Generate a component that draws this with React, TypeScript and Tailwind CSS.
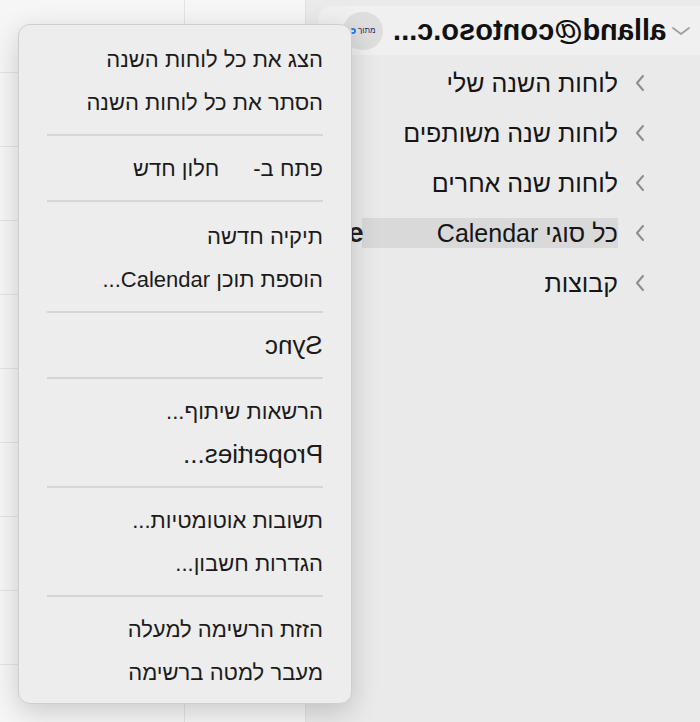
import React from "react";

const font = { fontFamily: '"Liberation Sans", Arial, "Noto Sans", sans-serif' };

function Chevron() {
  return (
    <svg width="12" height="20" viewBox="0 0 12 20" className="shrink-0">
      <path d="M9 3 L3 10 L9 17" fill="none" stroke="#8c8c8c" strokeWidth="2" strokeLinecap="round" strokeLinejoin="round" />
    </svg>
  );
}

function Sep() {
  return <div className="mr-[28px] ml-[28px] mt-[10px] mb-[11px] h-[2px] bg-[#d5d5d5]" />;
}

function Item({ children }: { children: React.ReactNode }) {
  return (
    <div className="h-[43px] flex items-center pr-[28px] text-[22px] text-[#1b1b1b] whitespace-nowrap">
      {children}
    </div>
  );
}

function Mirror({ children, className = "" }: { children: React.ReactNode; className?: string }) {
  return (
    <span dir="ltr" className={"inline-block -scale-x-100 " + className}>
      {children}
    </span>
  );
}

export default function App() {
  const rows = [73, 74, 74, 74, 74, 74, 74, 74, 74, 74];
  return (
    <div className="relative w-[700px] h-[722px] overflow-hidden flex bg-[#eaeaea]" style={font}>
      {/* calendar grid background */}
      <div className="w-[306px] h-full flex flex-col bg-[#f6f6f6] border-r border-[#e2e2e2]">
        {rows.map((h, i) => (
          <div key={i} className="flex border-b border-[#e3e3e3] shrink-0" style={{ height: h }}>
            <div className="w-[185px] border-r border-[#e3e3e3]" />
            <div className="flex-1" />
          </div>
        ))}
      </div>

      {/* right pane */}
      <div dir="rtl" className="flex-1 flex flex-col pt-[6px]">
        <div className="h-[49px] ml-[12px] rounded-l-[14px] bg-[#f0f0f0] flex items-center pr-[8px] gap-[4px]">
          <svg width="22" height="12" viewBox="0 0 22 12" className="shrink-0">
            <path d="M3 3 L11 9 L19 3" fill="none" stroke="#a0a0a0" strokeWidth="1.8" strokeLinecap="round" strokeLinejoin="round" />
          </svg>
          <span className="text-[29px] font-bold text-[#111] whitespace-nowrap leading-none">
            <Mirror>alland@contoso.c...</Mirror>
          </span>
          <div className="mr-[6px] w-[40px] h-[38px] rounded-full bg-[#dedede] flex items-center justify-center gap-[2px]">
            <span className="text-[8px] text-[#1b2a6b]">מתוך</span>
            <span className="w-[6px] h-[6px] rounded-full border-2 border-[#2f7fe0] border-l-transparent" />
          </div>
        </div>

        <div className="flex flex-col mt-[3px]">
          {["לוחות השנה שלי", "לוחות שנה משותפים", "לוחות שנה אחרים", "כל סוגי Calendar", "קבוצות"].map((t, i) => (
            <div key={i} className="h-[50px] flex items-center pr-[54px]">
              <Chevron />
              <div
                className={
                  "mr-[16px] text-[25px] text-[#151515] whitespace-nowrap leading-[30px] " +
                  (i === 3 ? "bg-[#d9d9d9] w-[256px] relative" : "")
                }
              >
                {t}
                {i === 3 && (
                  <span className="absolute left-[-14px] top-0 text-[28px] font-bold text-[#222]">e</span>
                )}
              </div>
            </div>
          ))}
        </div>
      </div>

      {/* context menu */}
      <div
        dir="rtl"
        className="absolute left-[18px] top-[24px] w-[334px] h-[680px] rounded-[12px] bg-[#ededed] border border-[#cfcfcf] shadow-[0_8px_28px_rgba(0,0,0,0.18)] flex flex-col pt-[13px]"
      >
        <Item>הצג את כל לוחות השנה</Item>
        <Item>הסתר את כל לוחות השנה</Item>
        <Sep />
        <Item>
          <span>פתח ב-</span>
          <span className="mr-[34px]">חלון חדש</span>
        </Item>
        <Sep />
        <div className="h-[2px]" />
        <Item>תיקיה חדשה</Item>
        <Item>הוספת תוכן Calendar...</Item>
        <Sep />
        <Item>
          <Mirror className="text-[26px]">Sync</Mirror>
        </Item>
        <Sep />
        <Item>הרשאות שיתוף...</Item>
        <Item>
          <Mirror className="text-[26px]">Properties...</Mirror>
        </Item>
        <Sep />
        <Item>תשובות אוטומטיות...</Item>
        <Item>הגדרות חשבון...</Item>
        <Sep />
        <Item>הזזת הרשימה למעלה</Item>
        <Item>מעבר למטה ברשימה</Item>
      </div>
    </div>
  );
}
